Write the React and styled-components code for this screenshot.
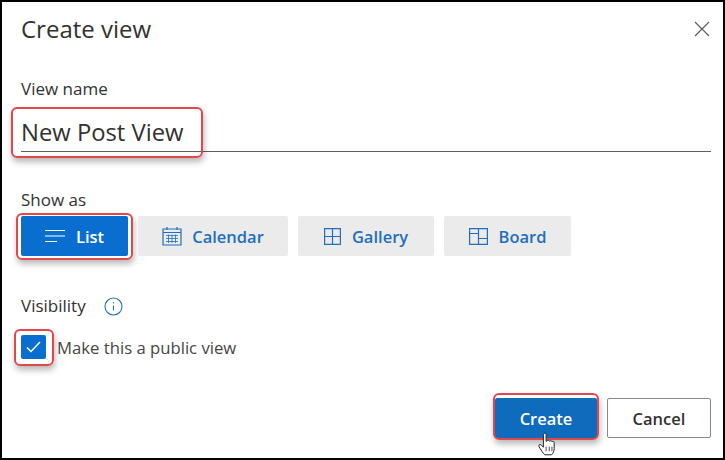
import styled, { createGlobalStyle } from 'styled-components';

const GlobalStyle = createGlobalStyle`
  html, body {
    margin: 0;
    padding: 0;
    background: #fff;
  }
  body {
    font-family: "Open Sans", "Noto Sans", "Liberation Sans", sans-serif;
  }
`;

const Dialog = styled.div`
  box-sizing: border-box;
  width: 725px;
  height: 460px;
  border: 2px solid #000;
  background: #fff;
  padding: 0 12px 0 19px;
  display: flex;
  flex-direction: column;
`;

const Header = styled.div`
  height: 54px;
  display: flex;
  align-items: center;
  justify-content: space-between;
`;

const Title = styled.h1`
  margin: -2px 0 0;
  font-size: 24px;
  font-weight: 500;
  color: #323130;
`;

const CloseButton = styled.button`
  width: 18px;
  height: 18px;
  padding: 0;
  border: 0;
  background: none;
  color: #605e5c;
  display: flex;
`;

const Label = styled.div`
  font-size: 17px;
  line-height: 22px;
  color: #323130;
`;

const NameLabel = styled(Label)`
  margin-top: 22px;
`;

const NameField = styled.div`
  box-sizing: border-box;
  margin-top: 8px;
  height: 44px;
  padding-top: 5px;
  border-bottom: 1px solid #605e5c;
  display: flex;
  align-items: center;
`;

const NameText = styled.span`
  position: relative;
  font-size: 23.8px;
  line-height: 32px;
  color: #323130;
`;

const Highlight = styled.span`
  position: absolute;
  top: ${(p) => p.$top}px;
  bottom: ${(p) => p.$bottom}px;
  left: ${(p) => p.$left}px;
  right: ${(p) => p.$right}px;
  border: 2px solid #e2474c;
  border-radius: 6px;
  box-shadow: 1px 4px 6px rgba(0, 0, 0, 0.28);
  pointer-events: none;
`;

const ShowLabel = styled(Label)`
  margin-top: 37px;
`;

const ButtonRow = styled.div`
  margin-top: 5px;
  display: flex;
  gap: 10px;
`;

const ViewButton = styled.div`
  position: relative;
  box-sizing: border-box;
  width: ${(p) => p.$width}px;
  height: 40px;
  display: flex;
  align-items: center;
  justify-content: center;
  gap: ${(p) => p.$gap}px;
  border-radius: 2px;
  background: ${(p) => (p.$active ? '#0a6ed1' : '#ebebeb')};
  color: ${(p) => (p.$active ? '#fff' : '#1f6fbe')};
  font-size: 16.5px;
  font-weight: 600;
`;

const VisibilityRow = styled.div`
  margin-top: 39px;
  display: flex;
  align-items: center;
  gap: 18px;
`;

const CheckRow = styled.div`
  margin-top: 17px;
  display: flex;
  align-items: center;
  gap: 11px;
`;

const CheckBox = styled.span`
  position: relative;
  width: 25px;
  height: 24px;
  border-radius: 2px;
  background: #0a6ed1;
  display: flex;
  align-items: center;
  justify-content: center;
`;

const CheckLabel = styled.span`
  font-size: 16.7px;
  line-height: 22px;
  color: #484644;
  margin-top: 3px;
`;

const Footer = styled.div`
  margin-top: 39px;
  display: flex;
  justify-content: flex-end;
  gap: 10px;
`;

const ActionButton = styled.div`
  position: relative;
  box-sizing: border-box;
  width: ${(p) => p.$width}px;
  height: 40px;
  display: flex;
  align-items: center;
  justify-content: center;
  border-radius: 2px;
  font-size: 16.5px;
  font-weight: 600;
  background: ${(p) => (p.$primary ? '#0f6cbd' : '#fff')};
  color: ${(p) => (p.$primary ? '#fff' : '#323130')};
  border: ${(p) => (p.$primary ? '0' : '1px solid #8a8886')};
`;

const Pointer = styled.svg`
  position: absolute;
  left: 43px;
  top: 34px;
  width: 18px;
  height: 24px;
`;

const icon = { fill: 'none', stroke: 'currentColor', strokeWidth: 1.2 };

const ListIcon = () => (
  <svg width="21" height="14" viewBox="0 0 21 14" {...icon}>
    <path d="M0 1.5h20M0 7h20M0 12.5h12" />
  </svg>
);

const CalendarIcon = () => (
  <svg width="20" height="20" viewBox="0 0 20 20" {...icon}>
    <path d="M1 3h18v16H1zM1 6.500h18M5 1v3M15 1v3" />
    <path d="M4 9.500h12M4 12.500h12M4 15.500h12M6.500 8.500v8.500M10 8.500v8.500M13.500 8.500v8.500" strokeWidth="0.8" />
  </svg>
);

const GalleryIcon = () => (
  <svg width="17" height="17" viewBox="0 0 17 17" {...icon}>
    <path d="M.6.6h15.800v15.800H.6zM8.500.6v15.800M.6 8.500h15.800" />
  </svg>
);

const BoardIcon = () => (
  <svg width="19" height="17" viewBox="0 0 19 17" {...icon}>
    <path d="M.6.6h17.800v15.800H.6zM.6 5.500h9M9.500.6v15.800M9.500 10.500h8.900" />
  </svg>
);

const InfoIcon = () => (
  <svg width="19" height="19" viewBox="0 0 19 19" fill="none" stroke="#1f6fbe" strokeWidth="1.1">
    <circle cx="9.500" cy="9.500" r="8.500" />
    <path d="M9.500 8.500v5" />
    <circle cx="9.500" cy="5.800" r="0.7" fill="#1f6fbe" stroke="none" />
  </svg>
);

export default function App() {
  return (
    <>
      <GlobalStyle />
      <Dialog>
        <Header>
          <Title>Create view</Title>
          <CloseButton aria-label="Close">
            <svg width="18" height="18" viewBox="0 0 18 18" stroke="currentColor" strokeWidth="1.2">
              <path d="M2 2l14 14M16 2L2 16" />
            </svg>
          </CloseButton>
        </Header>

        <NameLabel>View name</NameLabel>
        <NameField>
          <NameText>
            New Post View
            <Highlight $top={-9} $bottom={-10} $left={-10} $right={-19} />
          </NameText>
        </NameField>

        <ShowLabel>Show as</ShowLabel>
        <ButtonRow>
          <ViewButton $active $width={107} $gap={10}>
            <ListIcon />
            List
            <Highlight $top={-3} $bottom={-4} $left={-5} $right={-5} />
          </ViewButton>
          <ViewButton $width={150} $gap={10}><CalendarIcon />Calendar</ViewButton>
          <ViewButton $width={136} $gap={11}><GalleryIcon />Gallery</ViewButton>
          <ViewButton $width={127} $gap={11}><BoardIcon />Board</ViewButton>
        </ButtonRow>

        <VisibilityRow>
          <Label>Visibility</Label>
          <InfoIcon />
        </VisibilityRow>
        <CheckRow>
          <CheckBox>
            <svg width="15" height="12" viewBox="0 0 15 12" fill="none" stroke="#fff" strokeWidth="1.5">
              <path d="M1 6.500L5 10.500 14 1" />
            </svg>
            <Highlight $top={-6} $bottom={-7} $left={-7} $right={-8} />
          </CheckBox>
          <CheckLabel>Make this a public view</CheckLabel>
        </CheckRow>

        <Footer>
          <ActionButton $primary $width={102}>
            Create
            <Highlight $top={-5} $bottom={-2} $left={-2} $right={-2} />
            <Pointer viewBox="0 0 20 26">
              <path
                d="M6 2.500c0-2 3-2 3 0v7.500l1-.2c.2-1.400 2.500-1.400 2.700 0l.3.300c.4-1.100 2.400-1 2.600.4.500-.7 2.400-.5 2.400 1.200v6.300c0 3-1.500 6-3 7H7.500C6 24 2.500 18.500 1.200 16c-1-2 .8-3.200 2.200-2L6 16.500z"
                fill="#fff"
                stroke="#222"
                strokeWidth="1.100"
              />
              <path d="M9 16v5M12.500 16v5M15.500 16v5" stroke="#222" strokeWidth="0.900" />
            </Pointer>
          </ActionButton>
          <ActionButton $width={104}>Cancel</ActionButton>
        </Footer>
      </Dialog>
    </>
  );
}
